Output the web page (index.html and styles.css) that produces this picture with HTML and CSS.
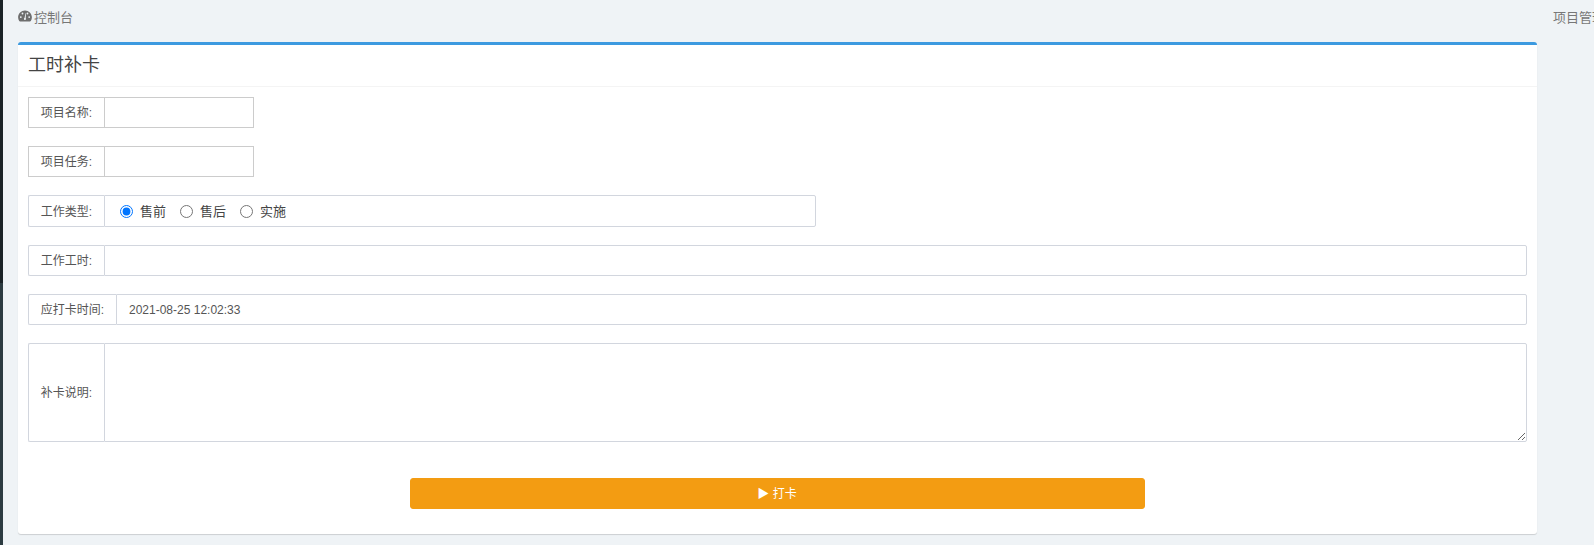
FILE: index.html
```html
<!DOCTYPE html>
<html lang="zh-CN">
<head>
<meta charset="utf-8">
<title>工时补卡</title>
<link rel="stylesheet" href="styles.css">
</head>
<body>
<aside class="sidebar"></aside>
<main class="content">
  <div class="topbar">
    <div class="crumb">
      <svg class="gauge" viewBox="0 0 14 12" width="14" height="12"><path fill="#6e6e6e" fill-rule="evenodd" d="M7 .4C3.200.4.100 3.400.100 7.200c0 1.500.4 2.800 1.100 3.900.2.300.5.500.9.500h9.800c.4 0 .7-.2.900-.5.700-1.100 1.100-2.400 1.100-3.900C13.900 3.400 10.800.4 7 .4zM2.800 8a.9.9 0 1 1 0-1.800.9.9 0 0 1 0 1.800zM4.500 4.400a.9.9 0 1 1 0-1.800.9.9 0 0 1 0 1.800zM7.900 9.500a1.100 1.100 0 0 1-2-.7c0-.4.200-.8.600-.9L7.600 3.200h.5l-.4 4.800c.3.300.4.900.2 1.500zM9.500 4.400a.9.900 0 1 1 0-1.800.9.900 0 0 1 0 1.800zM11.200 8a.9.900 0 1 1 0-1.800.9.900 0 0 1 0 1.800z"/></svg>
      <span>控制台</span>
    </div>
    <div class="crumb-right">项目管理</div>
  </div>
  <section class="card">
    <h3 class="card-title">工时补卡</h3>
    <form class="card-body">
      <div class="group short">
        <label class="addon">项目名称:</label>
        <input class="control" type="text">
      </div>
      <div class="group short">
        <label class="addon">项目任务:</label>
        <input class="control" type="text">
      </div>
      <div class="group medium soft radio-row">
        <label class="addon">工作类型:</label>
        <div class="control radios">
          <label class="radio"><input type="radio" name="t" checked>售前</label>
          <label class="radio"><input type="radio" name="t">售后</label>
          <label class="radio"><input type="radio" name="t">实施</label>
        </div>
      </div>
      <div class="group soft">
        <label class="addon">工作工时:</label>
        <input class="control" type="text">
      </div>
      <div class="group soft">
        <label class="addon wide">应打卡时间:</label>
        <input class="control value" type="text" value="2021-08-25 12:02:33">
      </div>
      <div class="group soft tall">
        <label class="addon">补卡说明:</label>
        <textarea class="control"></textarea>
      </div>
      <div class="actions">
        <button class="submit" type="button">▶ 打卡</button>
      </div>
    </form>
  </section>
</main>
</body>
</html>
```

FILE: styles.css
```css
* { box-sizing: border-box; }
html, body { margin: 0; height: 545px; overflow: hidden; }
body {
  display: flex;
  background: #eff3f6;
  font-family: "Liberation Sans", "Noto Sans CJK SC", sans-serif;
  font-size: 12px;
  color: #555;
}
.sidebar { width: 3px; flex: none; background: linear-gradient(#1a2226 283px, #2c3b41 283px); }
.content { flex: 1; min-width: 0; padding-left: 15px; }
.topbar { display: flex; height: 42px; padding-top: 8px; white-space: nowrap; }
.crumb { display: flex; align-items: center; gap: 2px; height: 16px; color: #777; font-size: 13px; }
.gauge { display: block; }
.crumb-right { margin-left: auto; margin-top: 2px; margin-right: -60px; width: 101px; height: 16px; line-height: 16px; color: #777; font-size: 13px; }
.card {
  width: 1519px;
  height: 492px;
  background: #fff;
  border-top: 3px solid #3c9ae0;
  border-radius: 3px;
  box-shadow: 0 1px 1px rgba(0,0,0,.15);
}
.card-title {
  margin: 0;
  height: 42px;
  padding: 0 10px;
  line-height: 41px;
  font-size: 18px;
  font-weight: 400;
  color: #444;
  border-bottom: 1px solid #f4f4f4;
}
.card-body { padding: 10px 10px 0; }
.group { display: flex; height: 31px; margin-bottom: 18px; }
.short { width: 226px; }
.medium { width: 788px; }
.radio-row { height: 32px; }
.addon {
  flex: none;
  width: 76px;
  display: flex;
  align-items: center;
  justify-content: center;
  padding-bottom: 2px;
  background: #fff;
  border: 1px solid #ccc;
  border-right: 0;
  color: #555;
  font-size: 12px;
}
.addon.wide { width: 88px; }
.control {
  flex: 1;
  min-width: 0;
  margin: 0;
  padding: 0 12px;
  background: #fff;
  border: 1px solid #ccc;
  color: #555;
  font: inherit;
  outline: none;
}
.soft .addon, .soft .control { border-color: #d2d6de; }
.soft .addon { border-radius: 2px 0 0 2px; }
.soft .control { border-radius: 0 2px 2px 0; }
.radios { display: flex; align-items: center; gap: 14px; padding: 0 0 1px 15px; font-size: 13px; }
.radio { display: flex; align-items: center; color: #444; }
.radio input { margin: 1px 7px 0 0; width: 13px; height: 13px; }
.tall { height: 99px; margin-bottom: 36px; }
.tall textarea { display: block; resize: both; }
.actions { display: flex; justify-content: center; }
.submit {
  width: 735px;
  height: 31px;
  padding: 0 1px 2px 0;
  border: 1px solid #f39c12;
  border-radius: 3px;
  background: #f39c12;
  color: #fff;
  font: inherit;
  cursor: pointer;
}
```
